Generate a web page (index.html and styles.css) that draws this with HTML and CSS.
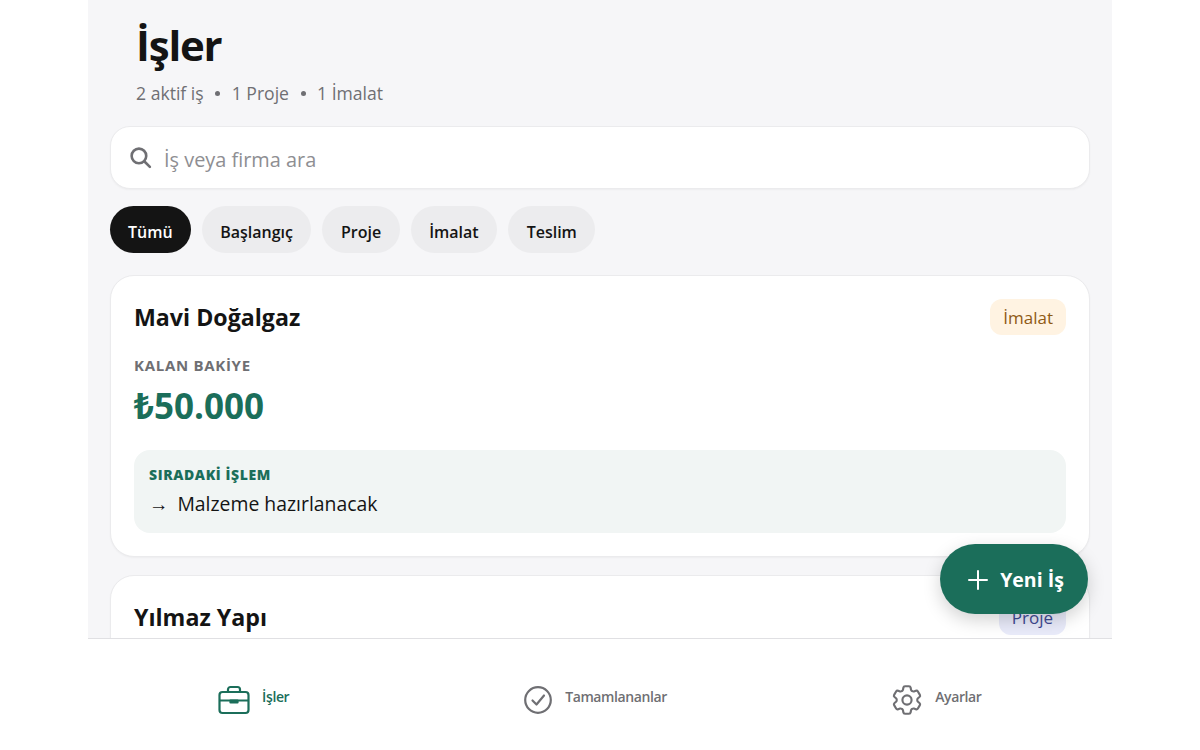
FILE: index.html
```html
<!DOCTYPE html>
<html lang="tr">
<head>
    <meta charset="UTF-8">
    <title>İşler</title>
    <link rel="stylesheet" href="styles.css">
</head>
<body>
    <div class="app">
        <main class="content">
            <header class="head">
                <h1>İşler</h1>
                <p class="summary"><span>2 aktif iş</span><i></i><span>1 Proje</span><i></i><span>1 İmalat</span></p>
            </header>

            <div class="search">
                <svg width="25" height="25" viewBox="0 0 24 24" fill="none" stroke="#6f6f73" stroke-width="2.5" stroke-linecap="round"><circle cx="10.5" cy="10.5" r="7"/><path d="M15.8 15.8 21 21"/></svg>
                <span>İş veya firma ara</span>
            </div>

            <div class="filters">
                <span class="pill active">Tümü</span>
                <span class="pill">Başlangıç</span>
                <span class="pill">Proje</span>
                <span class="pill">İmalat</span>
                <span class="pill">Teslim</span>
            </div>

            <section class="card">
                <div class="card-top">
                    <h2>Mavi Doğalgaz</h2>
                    <span class="badge orange">İmalat</span>
                </div>
                <div class="label">KALAN BAKİYE</div>
                <div class="amount">₺50.000</div>
                <div class="next">
                    <div class="next-title">SIRADAKİ İŞLEM</div>
                    <div class="next-text"><span class="arrow">→</span>Malzeme hazırlanacak</div>
                </div>
            </section>

            <section class="card">
                <div class="card-top">
                    <h2>Yılmaz Yapı</h2>
                    <span class="badge blue">Proje</span>
                </div>
            </section>
        </main>

        <button class="fab">
            <svg width="24" height="24" viewBox="0 0 24 24" fill="none" stroke="#fff" stroke-width="2" stroke-linecap="round"><path d="M12 3v18M3 12h18"/></svg>
            Yeni İş
        </button>

        <nav class="tabs">
            <div class="tab on">
                <svg width="32" height="30" viewBox="0 0 32 30" fill="none" stroke="#1b6e5a" stroke-width="2.2" stroke-linejoin="round"><rect x="1.5" y="7" width="29" height="21" rx="3"/><path d="M10 7V4.5A2.5 2.5 0 0 1 12.5 2h7A2.5 2.5 0 0 1 22 4.5V7M1.5 15.5h29"/><path d="M12.5 15.5h7v2h-7z"/></svg>
                <span>İşler</span>
            </div>
            <div class="tab">
                <svg width="30" height="30" viewBox="0 0 30 30" fill="none" stroke="#6f6f73" stroke-width="2.2" stroke-linecap="round" stroke-linejoin="round"><circle cx="15" cy="15" r="12.8"/><path d="m9.5 15.5 4 4 7.5-9"/></svg>
                <span>Tamamlananlar</span>
            </div>
            <div class="tab">
                <svg width="32" height="32" viewBox="1.5 1.5 21 21" fill="none" stroke="#6f6f73" stroke-width="1.4" stroke-linecap="round" stroke-linejoin="round"><path d="M9.594 3.94c.09-.542.56-.94 1.11-.94h2.593c.55 0 1.02.398 1.11.94l.213 1.281c.063.374.313.686.645.87.074.04.147.083.22.127.325.196.72.257 1.075.124l1.217-.456a1.125 1.125 0 0 1 1.37.49l1.296 2.247a1.125 1.125 0 0 1-.26 1.431l-1.003.827c-.293.241-.438.613-.43.992a7.723 7.723 0 0 1 0 .255c-.008.378.137.75.43.991l1.004.827c.424.35.534.955.26 1.43l-1.298 2.247a1.125 1.125 0 0 1-1.369.491l-1.217-.456c-.355-.133-.75-.072-1.076.124a6.47 6.47 0 0 1-.22.128c-.331.183-.581.495-.644.869l-.213 1.281c-.09.543-.56.94-1.11.94h-2.594c-.55 0-1.019-.398-1.11-.94l-.213-1.281c-.062-.374-.312-.686-.644-.87a6.52 6.52 0 0 1-.22-.127c-.325-.196-.72-.257-1.076-.124l-1.217.456a1.125 1.125 0 0 1-1.369-.49l-1.297-2.247a1.125 1.125 0 0 1 .26-1.431l1.004-.827c.292-.24.437-.613.43-.991a6.932 6.932 0 0 1 0-.255c.007-.38-.138-.751-.43-.992l-1.004-.827a1.125 1.125 0 0 1-.26-1.43l1.297-2.247a1.125 1.125 0 0 1 1.37-.491l1.216.456c.356.133.751.072 1.076-.124.072-.044.146-.086.22-.128.332-.183.582-.495.644-.869l.214-1.28Z"/><circle cx="12" cy="12" r="3"/></svg>
                <span>Ayarlar</span>
            </div>
        </nav>
    </div>
</body>
</html>
```

FILE: styles.css
```css
* {
    box-sizing: border-box;
    margin: 0;
    padding: 0;
}
body {
    background: #fff;
    font-family: "Open Sans", "Noto Sans", sans-serif;
    color: #141414;
    height: 750px;
    overflow: hidden;
}
.app {
    width: 1024px;
    height: 750px;
    margin: 0 auto;
    position: relative;
    display: flex;
    flex-direction: column;
}
.content {
    height: 638px;
    overflow: hidden;
    background: #f6f6f8;
    padding: 16px 22px 0;
}
.head {
    padding-left: 26px;
}
h1 {
    font-size: 42px;
    line-height: 58px;
    font-weight: 700;
    letter-spacing: -1.2px;
}
.summary {
    display: flex;
    align-items: center;
    font-size: 17.6px;
    line-height: 26px;
    color: #6f6f73;
    margin-top: 6px;
}
.summary i {
    width: 5px;
    height: 5px;
    border-radius: 50%;
    background: #6f6f73;
    margin: 0 11.5px;
}
.search {
    margin-top: 20px;
    height: 63px;
    background: #fff;
    border: 1px solid #ebebed;
    border-radius: 20px;
    box-shadow: 0 1px 2px rgba(0, 0, 0, 0.04);
    display: flex;
    align-items: center;
    gap: 11px;
    padding: 0 17px;
    font-size: 19.9px;
    color: #8e8e92;
}
.search span {
    padding-top: 3px;
}
.filters {
    display: flex;
    gap: 11px;
    margin-top: 17px;
}
.pill {
    height: 47px;
    border-radius: 24px;
    background: #ececee;
    padding: 4px 18.5px 0;
    display: flex;
    align-items: center;
    font-size: 16px;
    font-weight: 600;
}
.pill.active {
    background: #141414;
    color: #fff;
    padding: 4px 18px 0;
}
.card {
    margin-top: 22px;
    background: #fff;
    border: 1px solid #ebebed;
    border-radius: 24px;
    box-shadow: 0 1px 2px rgba(0, 0, 0, 0.04);
    padding: 23px 23px 23px;
}
.card + .card {
    margin-top: 18px;
    height: 120px;
}
.card-top {
    display: flex;
    justify-content: space-between;
    align-items: center;
}
h2 {
    font-size: 23.2px;
    line-height: 35px;
    font-weight: 700;
    padding-top: 1px;
}
.badge {
    height: 36px;
    border-radius: 12px;
    padding: 1px 13px 0;
    display: flex;
    align-items: center;
    font-size: 17px;
    font-weight: 500;
}
.orange {
    background: #fff3e2;
    color: #8f5a14;
}
.blue {
    background: #e9ebfa;
    color: #3f4a94;
}
.label {
    margin-top: 20px;
    font-size: 15px;
    line-height: 20px;
    font-weight: 700;
    letter-spacing: 0.7px;
    color: #6f6f73;
}
.amount {
    margin-top: 7px;
    font-size: 35px;
    line-height: 48px;
    font-weight: 700;
    color: #1b6e5a;
}
.next {
    margin-top: 20px;
    height: 83px;
    background: #f1f5f4;
    border-radius: 16px;
    padding: 15px 15px;
}
.next-title {
    font-size: 14px;
    line-height: 20px;
    font-weight: 800;
    letter-spacing: 0.6px;
    color: #1b6e5a;
}
.next-text {
    margin-top: 6px;
    font-size: 19.4px;
    line-height: 26px;
    font-weight: 500;
}
.arrow {
    margin-right: 9px;
}
.fab {
    position: absolute;
    right: 24px;
    top: 544px;
    width: 148px;
    height: 70px;
    border: 0;
    border-radius: 35px;
    background: #1b6e5a;
    color: #fff;
    font-family: inherit;
    font-size: 19.5px;
    font-weight: 700;
    display: flex;
    align-items: center;
    justify-content: center;
    gap: 10px;
    padding: 1px 0 0 2px;
    box-shadow: 0 6px 18px rgba(0, 0, 0, 0.18);
}
.tabs {
    flex: 1;
    background: #fff;
    border-top: 1px solid #e0e0e3;
    display: grid;
    grid-template-columns: repeat(3, 1fr);
    padding-top: 11px;
}
.tab {
    display: flex;
    align-items: center;
    justify-content: center;
    gap: 12px;
    padding-right: 10px;
    font-size: 14px;
    font-weight: 600;
    letter-spacing: -0.4px;
    color: #6f6f73;
}
.tab span {
    margin-bottom: 7px;
}
.tab.on {
    color: #1b6e5a;
}
```
